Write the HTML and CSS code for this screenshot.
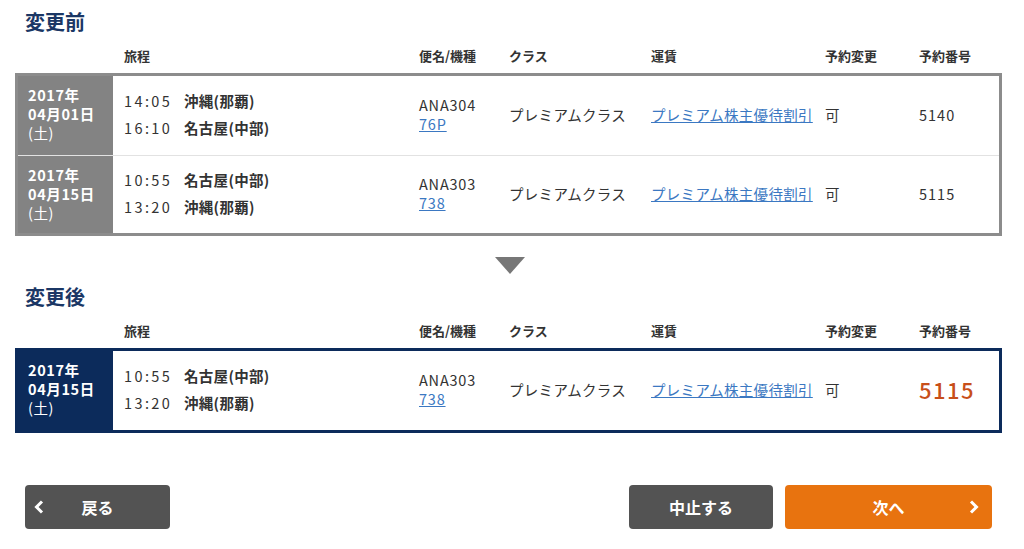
FILE: index.html
```html
<!DOCTYPE html>
<html lang="ja">
<head>
  <meta charset="UTF-8">
  <title>予約変更の確認</title>
  <link rel="stylesheet" href="styles.css">
</head>
<body>
  <div class="page">
    <!-- 変更前 -->
    <h2 class="section-title">変更前</h2>
    <div class="grid head">
      <div></div>
      <div class="c-route">旅程</div>
      <div>便名/機種</div>
      <div>クラス</div>
      <div>運賃</div>
      <div>予約変更</div>
      <div>予約番号</div>
    </div>
    <div class="flights before">
      <div class="grid row">
        <div class="c-date">2017年<br>04月01日<br><span class="wd">(土)</span></div>
        <div class="c-route">
          <div class="leg"><span class="time">14:05</span>沖縄(那覇)</div>
          <div class="leg"><span class="time">16:10</span>名古屋(中部)</div>
        </div>
        <div class="c-flight">ANA304<br><a href="#">76P</a></div>
        <div>プレミアムクラス</div>
        <div><a href="#">プレミアム株主優待割引</a></div>
        <div>可</div>
        <div class="num">5140</div>
      </div>
      <div class="grid row">
        <div class="c-date">2017年<br>04月15日<br><span class="wd">(土)</span></div>
        <div class="c-route">
          <div class="leg"><span class="time">10:55</span>名古屋(中部)</div>
          <div class="leg"><span class="time">13:20</span>沖縄(那覇)</div>
        </div>
        <div class="c-flight">ANA303<br><a href="#">738</a></div>
        <div>プレミアムクラス</div>
        <div><a href="#">プレミアム株主優待割引</a></div>
        <div>可</div>
        <div class="num">5115</div>
      </div>
    </div>

    <div class="arrow"></div>

    <!-- 変更後 -->
    <h2 class="section-title">変更後</h2>
    <div class="grid head">
      <div></div>
      <div class="c-route">旅程</div>
      <div>便名/機種</div>
      <div>クラス</div>
      <div>運賃</div>
      <div>予約変更</div>
      <div>予約番号</div>
    </div>
    <div class="flights after">
      <div class="grid row">
        <div class="c-date">2017年<br>04月15日<br><span class="wd">(土)</span></div>
        <div class="c-route">
          <div class="leg"><span class="time">10:55</span>名古屋(中部)</div>
          <div class="leg"><span class="time">13:20</span>沖縄(那覇)</div>
        </div>
        <div class="c-flight">ANA303<br><a href="#">738</a></div>
        <div>プレミアムクラス</div>
        <div><a href="#">プレミアム株主優待割引</a></div>
        <div>可</div>
        <div class="num big">5115</div>
      </div>
    </div>

    <div class="actions">
      <button class="btn btn-back">
        <svg class="chev" width="10" height="14" viewBox="0 0 10 14"><polyline points="8,1.5 2.5,7 8,12.5" fill="none" stroke="#fff" stroke-width="3"/></svg>
        戻る
      </button>
      <div class="actions-right">
        <button class="btn btn-cancel">中止する</button>
        <button class="btn btn-next">
          次へ
          <svg class="chev" width="10" height="14" viewBox="0 0 10 14"><polyline points="2,1.5 7.5,7 2,12.5" fill="none" stroke="#fff" stroke-width="3"/></svg>
        </button>
      </div>
    </div>
  </div>
</body>
</html>
```

FILE: styles.css
```css
body {
  margin: 0;
  background: #fff;
  font-family: "Noto Sans CJK JP", "Noto Sans", sans-serif;
  color: #333;
}

.page {
  width: 987px;
  padding: 8px 0 0 15px;
}

.section-title {
  margin: 0 0 0 10px;
  font-size: 20px;
  line-height: 28px;
  font-weight: bold;
  color: #1b3765;
}

.grid {
  display: grid;
  grid-template-columns: 95px 306px 90px 142px 174px 94px 80px;
}

.head {
  margin: 0 3px;
  padding: 10px 0 7px;
  font-size: 13px;
  line-height: 20px;
  font-weight: bold;
  color: #333;
}

.head .c-route {
  padding-left: 11px;
}

.flights {
  border: 3px solid #8c8c8c;
}

.flights.after {
  border-color: #0c2b5b;
}

.row {
  height: 79px;
  box-sizing: border-box;
  padding-bottom: 3px;
  align-items: center;
  font-size: 14.5px;
  letter-spacing: 0.3px;
}

.row + .row {
  height: 78px;
  border-top: 1px solid #e2e2e2;
}

.row > div {
  display: flex;
  flex-direction: column;
  justify-content: center;
}

.row .c-date {
  align-self: stretch;
  display: block;
  box-sizing: border-box;
  margin-bottom: -3px;
  padding: 9px 0 0 10px;
  font-size: 14.5px;
  line-height: 19px;
  font-weight: bold;
  letter-spacing: 0.6px;
  color: #fff;
  background: #838383;
}

.after .c-date {
  background: #0c2b5b;
}

.c-date .wd {
  font-weight: normal;
}

.row .c-route {
  padding-left: 11px;
  font-weight: bold;
  line-height: 27px;
}

.time {
  display: inline-block;
  width: 60px;
  font-weight: normal;
  letter-spacing: 2.4px;
}

.row .c-flight {
  display: block;
  line-height: 19px;
  letter-spacing: 0.8px;
}

a {
  color: #3b78c2;
  text-decoration: underline;
}

.num {
  letter-spacing: 1px;
}

.num.big {
  font-size: 22px;
  font-weight: 500;
  letter-spacing: 1.5px;
  color: #c84f1a;
}

.arrow {
  width: 0;
  height: 0;
  margin: 21px auto 9px;
  border-left: 15px solid transparent;
  border-right: 15px solid transparent;
  border-top: 17px solid #777;
  position: relative;
  left: 1px;
}

.actions {
  display: flex;
  justify-content: space-between;
  margin-top: 52px;
  padding: 0 10px;
}

.actions-right {
  display: flex;
  gap: 12px;
}

.btn {
  position: relative;
  height: 44px;
  border: none;
  border-radius: 4px;
  font-family: inherit;
  font-size: 16px;
  font-weight: bold;
  color: #fff;
  cursor: pointer;
}

.btn-back {
  width: 145px;
  background: #535353;
}

.btn-cancel {
  width: 144px;
  background: #535353;
}

.btn-next {
  width: 207px;
  background: #e8730f;
}

.chev {
  position: absolute;
  top: 15px;
}

.btn-back .chev {
  left: 9px;
}

.btn-next .chev {
  right: 13px;
}
```
